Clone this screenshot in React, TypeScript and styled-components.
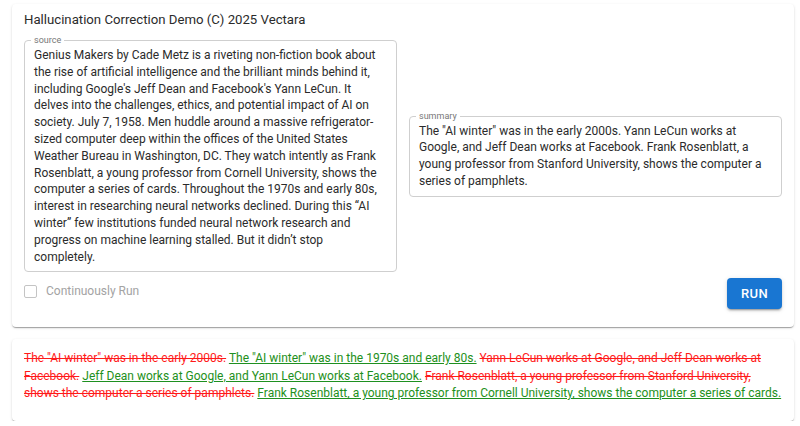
import React from "react";
import styled, { createGlobalStyle } from "styled-components";

const GlobalStyle = createGlobalStyle`
  body {
    margin: 0;
    background: #ffffff;
    font-family: Roboto, "Noto Sans", sans-serif;
    color: #2b2b2b;
  }
`;

const Page = styled.div`
  display: flex;
  flex-direction: column;
  gap: 12px;
  padding: 4px 6px 0 12px;
`;

const Card = styled.div<{ $bottom?: boolean }>`
  background: #fff;
  border-radius: 4px;
  box-shadow: 0 2px 1px -1px rgba(0, 0, 0, 0.2), 0 1px 1px 0 rgba(0, 0, 0, 0.14),
    0 1px 3px 0 rgba(0, 0, 0, 0.12);
  padding: ${(p) => (p.$bottom ? "11px 12px 18px" : "7px 12px 18px")};
`;

const Title = styled.div`
  font-size: 13.2px;
  line-height: 17px;
  margin-bottom: 12px;
`;

const Grid = styled.div`
  display: grid;
  grid-template-columns: 1fr 1fr;
  column-gap: 12px;
  row-gap: 6px;
  align-items: center;
`;

const Outline = styled.div`
  position: relative;
  border: 1px solid #cfcfcf;
  border-radius: 4px;
  padding: 6px 15px 6px 9px;
  font-size: 12px;
  line-height: 1.4;
  color: #2b2b2b;
`;

const Legend = styled.span`
  position: absolute;
  top: -6px;
  left: 6px;
  padding: 0 3px;
  background: #fff;
  font-size: 9px;
  line-height: 10px;
  color: #777;
`;

const CheckRow = styled.label`
  align-self: start;
  display: flex;
  align-items: center;
  gap: 9px;
  padding-top: 5px;
  font-size: 12px;
  line-height: 17px;
  color: #a3a3a3;
`;

const Box = styled.span`
  width: 11px;
  height: 11px;
  border: 1.5px solid #c4c4c4;
  border-radius: 2px;
`;

const ButtonCell = styled.div`
  display: flex;
  justify-content: flex-end;
`;

const RunButton = styled.button`
  width: 55px;
  height: 31px;
  border: none;
  border-radius: 4px;
  background: #1976d2;
  color: #fff;
  font-family: Roboto, sans-serif;
  font-size: 13px;
  font-weight: 500;
  letter-spacing: 0.4px;
  box-shadow: 0 3px 1px -2px rgba(0, 0, 0, 0.2), 0 2px 2px 0 rgba(0, 0, 0, 0.14),
    0 1px 5px 0 rgba(0, 0, 0, 0.12);
`;

const Diff = styled.div`
  font-size: 12px;
  line-height: 17.5px;
`;

const Chunk = styled.span<{ $kind: "del" | "ins" }>`
  color: ${(p) => (p.$kind === "del" ? "#ff1a1a" : "#1e9020")};
  text-decoration: ${(p) => (p.$kind === "del" ? "line-through" : "underline")};
`;

const source =
  "Genius Makers by Cade Metz is a riveting non-fiction book about the rise of artificial intelligence and the brilliant minds behind it, including Google's Jeff Dean and Facebook's Yann LeCun. It delves into the challenges, ethics, and potential impact of AI on society. July 7, 1958. Men huddle around a massive refrigerator-sized computer deep within the offices of the United States Weather Bureau in Washington, DC. They watch intently as Frank Rosenblatt, a young professor from Cornell University, shows the computer a series of cards. Throughout the 1970s and early 80s, interest in researching neural networks declined. During this \u201cAI winter\u201d few institutions funded neural network research and progress on machine learning stalled. But it didn\u2019t stop completely.";

const summary =
  'The "AI winter" was in the early 2000s. Yann LeCun works at Google, and Jeff Dean works at Facebook. Frank Rosenblatt, a young professor from Stanford University, shows the computer a series of pamphlets.';

const corrections: { kind: "del" | "ins"; text: string }[] = [
  { kind: "del", text: 'The "AI winter" was in the early 2000s.' },
  { kind: "ins", text: 'The "AI winter" was in the 1970s and early 80s.' },
  { kind: "del", text: "Yann LeCun works at Google, and Jeff Dean works at Facebook." },
  { kind: "ins", text: "Jeff Dean works at Google, and Yann LeCun works at Facebook." },
  {
    kind: "del",
    text: "Frank Rosenblatt, a young professor from Stanford University, shows the computer a series of pamphlets.",
  },
  {
    kind: "ins",
    text: "Frank Rosenblatt, a young professor from Cornell University, shows the computer a series of cards.",
  },
];

const App: React.FC = () => {
  return (
    <Page>
      <GlobalStyle />
      <Card>
        <Title>Hallucination Correction Demo (C) 2025 Vectara</Title>
        <Grid>
          <Outline>
            <Legend>source</Legend>
            {source}
          </Outline>
          <Outline>
            <Legend>summary</Legend>
            {summary}
          </Outline>
          <CheckRow>
            <Box />
            Continuously Run
          </CheckRow>
          <ButtonCell>
            <RunButton>RUN</RunButton>
          </ButtonCell>
        </Grid>
      </Card>
      <Card $bottom>
        <Diff>
          {corrections.map((c, i) => (
            <React.Fragment key={i}>
              <Chunk $kind={c.kind}>{c.text}</Chunk>
              {i < corrections.length - 1 ? " " : null}
            </React.Fragment>
          ))}
        </Diff>
      </Card>
    </Page>
  );
};

export default App;
